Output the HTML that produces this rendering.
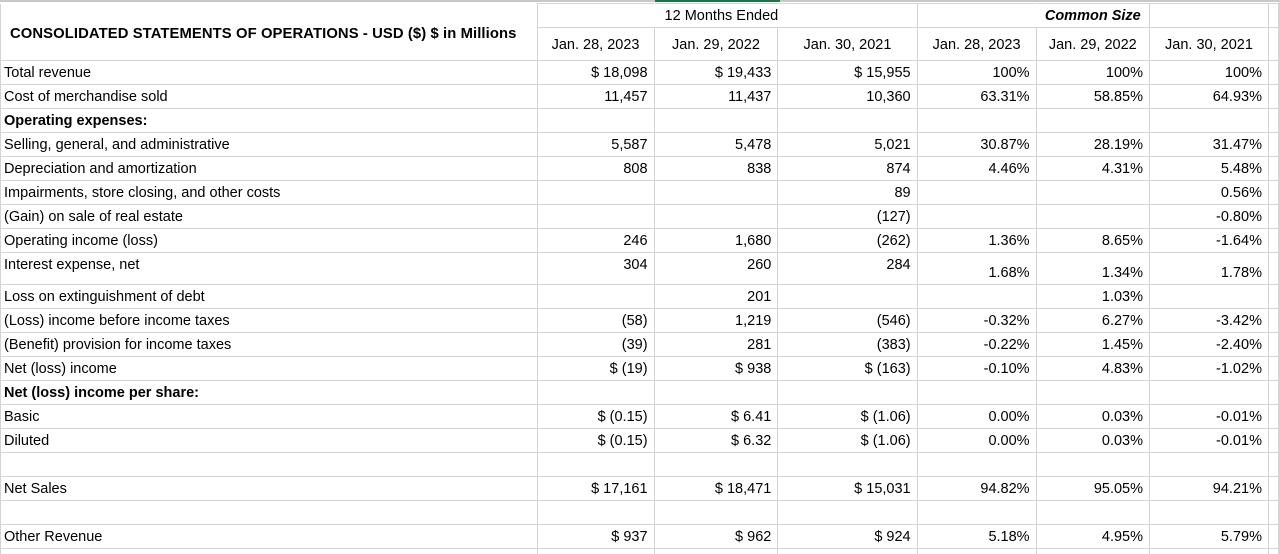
<!DOCTYPE html>
<html><head><meta charset="utf-8"><style>
html,body{margin:0;padding:0;background:#fff;overflow:hidden;width:1279px;height:554px}
body{font-family:"Liberation Sans",Arial,sans-serif;font-size:14.5px;color:#000;position:relative}
table{border-collapse:collapse;table-layout:fixed;position:absolute;left:0;top:3px}
td{border:1px solid #d4d4d4;padding:1px 6px 0 3px;white-space:nowrap;overflow:visible;height:22px;line-height:22px;text-align:right;vertical-align:bottom;box-sizing:content-box}
td.l{text-align:left;padding-left:3px}
td.c{text-align:center;padding:0}
.b{font-weight:bold}
</style></head><body>
<div style="position:absolute;left:0;top:0;width:1279px;height:2px;background:#c8c8c8"></div>
<div style="position:absolute;left:655px;top:0;width:125px;height:2px;background:#217346"></div>
<table>
<colgroup><col style="width:537px"><col style="width:118px"><col style="width:125px"><col style="width:141px"><col style="width:120px"><col style="width:114px"><col style="width:120px"><col style="width:4px"></colgroup>
<tr><td class="l b" rowspan="2" style="vertical-align:middle;font-size:14.8px;padding-left:9px;padding-top:4px;border-top:none;letter-spacing:0.1px">CONSOLIDATED STATEMENTS OF OPERATIONS - USD ($) $ in Millions</td><td style="border-right-color:#fff"></td><td class="c" colspan="2" style="text-align:left;padding-left:10px;line-height:22px;height:22px">12 Months Ended</td><td style="border-right-color:#fff"></td><td class="c b" style="font-style:italic;line-height:22px;height:22px">Common Size</td><td></td><td></td></tr>
<tr><td class="c" style="line-height:30px;height:32px">Jan. 28, 2023</td><td class="c" style="line-height:30px;height:32px">Jan. 29, 2022</td><td class="c" style="line-height:30px;height:32px">Jan. 30, 2021</td><td class="c" style="line-height:30px;height:32px">Jan. 28, 2023</td><td class="c" style="line-height:30px;height:32px">Jan. 29, 2022</td><td class="c" style="line-height:30px;height:32px">Jan. 30, 2021</td><td></td></tr>
<tr><td class="l">Total revenue</td><td>$ 18,098</td><td>$ 19,433</td><td>$ 15,955</td><td>100%</td><td>100%</td><td>100%</td><td></td></tr>
<tr><td class="l">Cost of merchandise sold</td><td>11,457</td><td>11,437</td><td>10,360</td><td>63.31%</td><td>58.85%</td><td>64.93%</td><td></td></tr>
<tr><td class="l b">Operating expenses:</td><td></td><td></td><td></td><td></td><td></td><td></td><td></td></tr>
<tr><td class="l">Selling, general, and administrative</td><td>5,587</td><td>5,478</td><td>5,021</td><td>30.87%</td><td>28.19%</td><td>31.47%</td><td></td></tr>
<tr><td class="l">Depreciation and amortization</td><td>808</td><td>838</td><td>874</td><td>4.46%</td><td>4.31%</td><td>5.48%</td><td></td></tr>
<tr><td class="l">Impairments, store closing, and other costs</td><td></td><td></td><td>89</td><td></td><td></td><td>0.56%</td><td></td></tr>
<tr><td class="l">(Gain) on sale of real estate</td><td></td><td></td><td>(127)</td><td></td><td></td><td>-0.80%</td><td></td></tr>
<tr><td class="l">Operating income (loss)</td><td>246</td><td>1,680</td><td>(262)</td><td>1.36%</td><td>8.65%</td><td>-1.64%</td><td></td></tr>
<tr><td class="l" style="vertical-align:top;height:30px">Interest expense, net</td><td style="vertical-align:top;height:30px">304</td><td style="vertical-align:top;height:30px">260</td><td style="vertical-align:top;height:30px">284</td><td style="height:30px">1.68%</td><td style="height:30px">1.34%</td><td style="height:30px">1.78%</td><td style="height:30px"></td></tr>
<tr><td class="l">Loss on extinguishment of debt</td><td></td><td>201</td><td></td><td></td><td>1.03%</td><td></td><td></td></tr>
<tr><td class="l">(Loss) income before income taxes</td><td>(58)</td><td>1,219</td><td>(546)</td><td>-0.32%</td><td>6.27%</td><td>-3.42%</td><td></td></tr>
<tr><td class="l">(Benefit) provision for income taxes</td><td>(39)</td><td>281</td><td>(383)</td><td>-0.22%</td><td>1.45%</td><td>-2.40%</td><td></td></tr>
<tr><td class="l">Net (loss) income</td><td>$ (19)</td><td>$ 938</td><td>$ (163)</td><td>-0.10%</td><td>4.83%</td><td>-1.02%</td><td></td></tr>
<tr><td class="l b">Net (loss) income per share:</td><td></td><td></td><td></td><td></td><td></td><td></td><td></td></tr>
<tr><td class="l">Basic</td><td>$ (0.15)</td><td>$ 6.41</td><td>$ (1.06)</td><td>0.00%</td><td>0.03%</td><td>-0.01%</td><td></td></tr>
<tr><td class="l">Diluted</td><td>$ (0.15)</td><td>$ 6.32</td><td>$ (1.06)</td><td>0.00%</td><td>0.03%</td><td>-0.01%</td><td></td></tr>
<tr><td class="l"></td><td></td><td></td><td></td><td></td><td></td><td></td><td></td></tr>
<tr><td class="l">Net Sales</td><td>$ 17,161</td><td>$ 18,471</td><td>$ 15,031</td><td>94.82%</td><td>95.05%</td><td>94.21%</td><td></td></tr>
<tr><td class="l"></td><td></td><td></td><td></td><td></td><td></td><td></td><td></td></tr>
<tr><td class="l">Other Revenue</td><td>$ 937</td><td>$ 962</td><td>$ 924</td><td>5.18%</td><td>4.95%</td><td>5.79%</td><td></td></tr>
<tr><td class="l"></td><td></td><td></td><td></td><td></td><td></td><td></td><td></td></tr>
</table>
</body></html>
